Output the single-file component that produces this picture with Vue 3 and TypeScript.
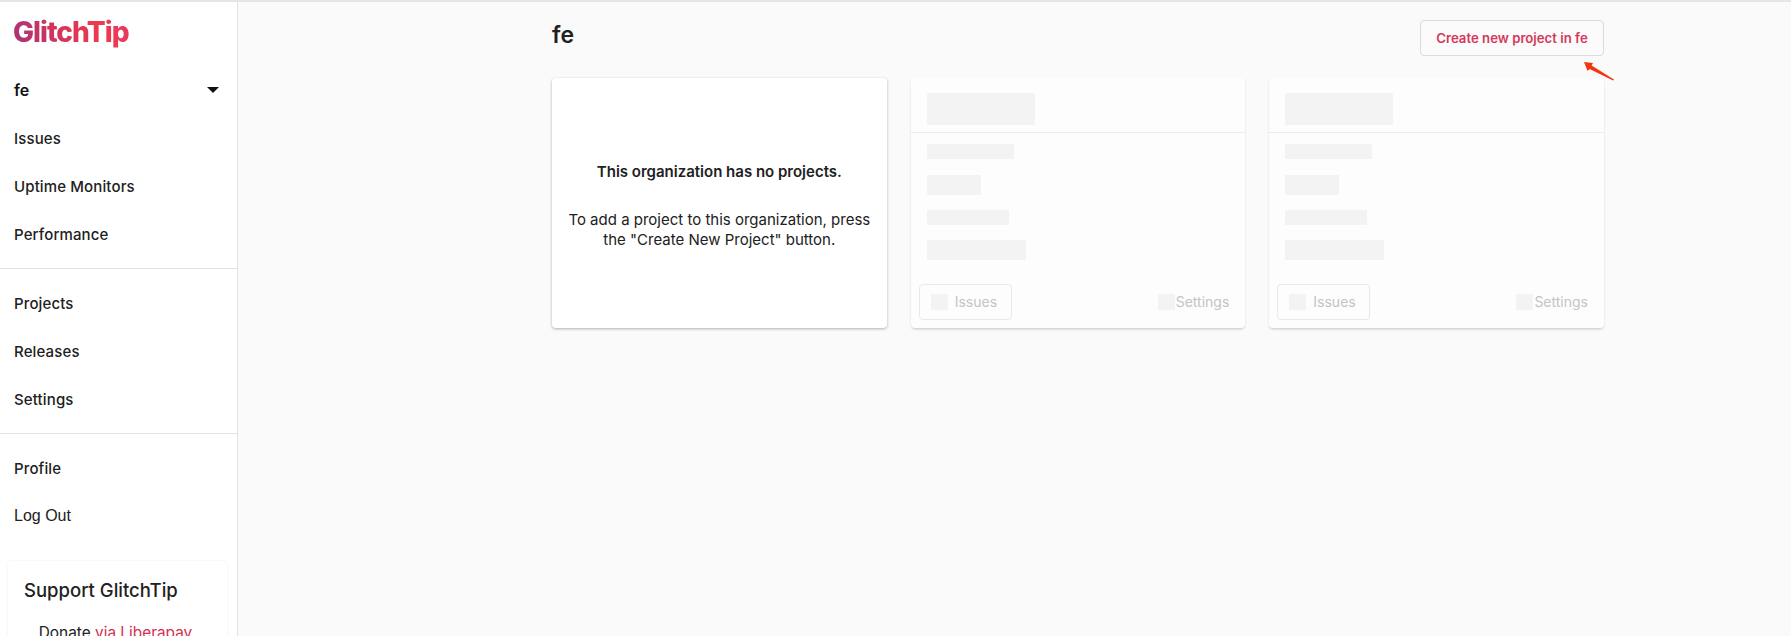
<script setup lang="ts">
const navGroups: string[][] = [
  ['Issues', 'Uptime Monitors', 'Performance'],
  ['Projects', 'Releases', 'Settings'],
]
const bars = [
  { w: 87, h: 15, mb: 16 },
  { w: 54, h: 20, mb: 15 },
  { w: 82, h: 15, mb: 15 },
  { w: 99, h: 20, mb: 0 },
]
</script>

<template>
  <div class="page">
    <aside class="sidebar">
      <div class="logo">GlitchTip</div>
      <div class="org">
        <span>fe</span>
        <span class="caret"></span>
      </div>
      <template v-for="(group, i) in navGroups" :key="i">
        <a v-for="item in group" :key="item" class="nav">{{ item }}</a>
        <hr class="rule" />
      </template>
      <a class="nav">Profile</a>
      <a class="nav arial">Log Out</a>
      <section class="support">
        <h3>Support GlitchTip</h3>
        <p>Donate <a>via Liberapay</a></p>
      </section>
    </aside>
    <main class="main">
      <header class="head">
        <h1>fe</h1>
        <button class="create">Create new project in fe</button>
        <svg class="arrow" width="34" height="22" viewBox="0 0 34 22">
          <path d="M2 2 L11 3 L9.6 5.6 L32 19.4 L31.2 20.6 L7.6 9 L5.6 11 Z" fill="#f5330f" />
        </svg>
      </header>
      <div class="grid">
        <div class="card empty">
          <p class="strong">This organization has no projects.</p>
          <p>To add a project to this organization, press the "Create New Project" button.</p>
        </div>
        <div v-for="n in 2" :key="n" class="card ghost">
          <div class="ghost-head"><div class="ph title"></div></div>
          <div class="ghost-body">
            <div
              v-for="(b, j) in bars"
              :key="j"
              class="ph"
              :style="{ width: b.w + 'px', height: b.h + 'px', marginBottom: b.mb + 'px' }"
            ></div>
          </div>
          <div class="ghost-foot">
            <span class="ghost-btn"><i class="ph sq"></i>Issues</span>
            <span class="ghost-link"><i class="ph sq"></i>Settings</span>
          </div>
        </div>
      </div>
    </main>
  </div>
</template>

<style>
html, body { margin: 0; height: 100%; overflow: hidden; }
</style>

<style scoped>
.page {
  display: flex;
  height: 636px;
  overflow: hidden;
  box-sizing: border-box;
  border-top: 2px solid #e6e6ea;
  background: #fafafa;
  font-family: "Inter", "Roboto", sans-serif;
  color: #212121;
}
.sidebar {
  width: 238px;
  flex: none;
  box-sizing: border-box;
  background: #fff;
  border-right: 1px solid #e2e2e5;
  overflow: hidden;
}
.logo {
  margin: 13px 0 0 13px;
  height: 35px;
  width: max-content;
  font-size: 28px;
  line-height: 35px;
  font-weight: 800;
  letter-spacing: -1px;
  background: linear-gradient(70deg, #a5347c 0%, #d93556 45%, #ef3a50 75%, #e33a62 100%);
  -webkit-background-clip: text;
  background-clip: text;
  color: transparent;
}
.org {
  display: flex;
  align-items: center;
  justify-content: space-between;
  box-sizing: border-box;
  height: 49px;
  margin-top: 16px;
  padding: 0 18px 2px 14px;
  font-size: 16px;
  font-weight: 600;
  color: #111;
}
.caret {
  width: 0;
  height: 0;
  border-left: 6px solid transparent;
  border-right: 6px solid transparent;
  border-top: 6px solid #111;
}
.nav {
  display: block;
  height: 48px;
  line-height: 48px;
  padding-left: 14px;
  font-size: 15px;
  font-weight: 500;
  letter-spacing: 0.13px;
  color: #212121;
}
.arial {
  margin-top: -1px;
  font-family: "Liberation Sans", sans-serif;
  font-weight: 400;
  font-size: 16px;
  letter-spacing: 0;
}
.rule {
  border: 0;
  border-top: 1px solid #e2e2e5;
  margin: 9px 0 11px;
}
.support {
  margin: 21px 10px 0 8px;
  padding: 16px;
  box-shadow: 0 0 3px rgba(0, 0, 0, 0.07);
  border-radius: 4px;
}
.support h3 {
  margin: 0;
  font-size: 18.5px;
  font-weight: 500;
  line-height: 26px;
  color: #212121;
}
.support p {
  margin: 20px 4px 0 0;
  text-align: center;
  font-size: 15.4px;
}
.support a { color: #d32f50; }
.main {
  flex: 1;
  min-width: 0;
  box-sizing: border-box;
  padding: 0 187px 0 314px;
}
.head {
  position: relative;
  display: flex;
  justify-content: space-between;
  align-items: flex-start;
  height: 76px;
}
.head h1 {
  margin: 18px 0 0;
  font-size: 23px;
  line-height: 30px;
  font-weight: 600;
}
.create {
  margin-top: 18px;
  width: 184px;
  height: 36px;
  padding: 0;
  background: #fbfbfb;
  border: 1px solid #dcdcdf;
  border-radius: 4px;
  color: #d5385a;
  font-family: inherit;
  font-size: 13.2px;
  font-weight: 600;
}
.arrow {
  position: absolute;
  right: -12px;
  top: 58px;
}
.grid {
  display: grid;
  grid-template-columns: repeat(3, 1fr);
  gap: 24px;
}
.card {
  height: 250px;
  box-sizing: border-box;
  background: #fff;
  border-radius: 4px;
  box-shadow: 0 1px 3px rgba(0, 0, 0, 0.3);
}
.empty {
  display: flex;
  flex-direction: column;
  align-items: center;
  justify-content: center;
  gap: 28px;
  padding: 6px 14px 0;
  text-align: center;
  font-size: 15px;
  line-height: 20px;
}
.empty p { margin: 0; }
.strong { font-weight: 600; }
.ghost {
  display: flex;
  flex-direction: column;
  background: #fdfdfd;
  box-shadow: 0 2px 3px -1px rgba(0, 0, 0, 0.22), 1px 0 2px -1px rgba(0, 0, 0, 0.06), -1px 0 2px -1px rgba(0, 0, 0, 0.06);
}
.ph { background: #f3f3f3; }
.ghost-head {
  height: 55px;
  box-sizing: border-box;
  padding: 15px 16px 0;
  border-bottom: 1px solid #ededed;
}
.title { width: 108px; height: 32px; }
.ghost-body { padding: 11px 16px 0; flex: 1; }
.ghost-foot {
  display: flex;
  justify-content: space-between;
  align-items: center;
  padding: 0 16px 8px 8px;
  font-size: 14px;
  line-height: 16px;
  color: #c4c4c4;
}
.ghost-btn, .ghost-link {
  display: flex;
  align-items: center;
  gap: 7px;
}
.ghost-btn {
  width: 93px;
  height: 36px;
  box-sizing: border-box;
  padding-left: 11px;
  border: 1px solid #e9e9e9;
  border-radius: 4px;
}
.ghost-link { gap: 1px; }
.sq { display: block; width: 17px; height: 16px; }
</style>
